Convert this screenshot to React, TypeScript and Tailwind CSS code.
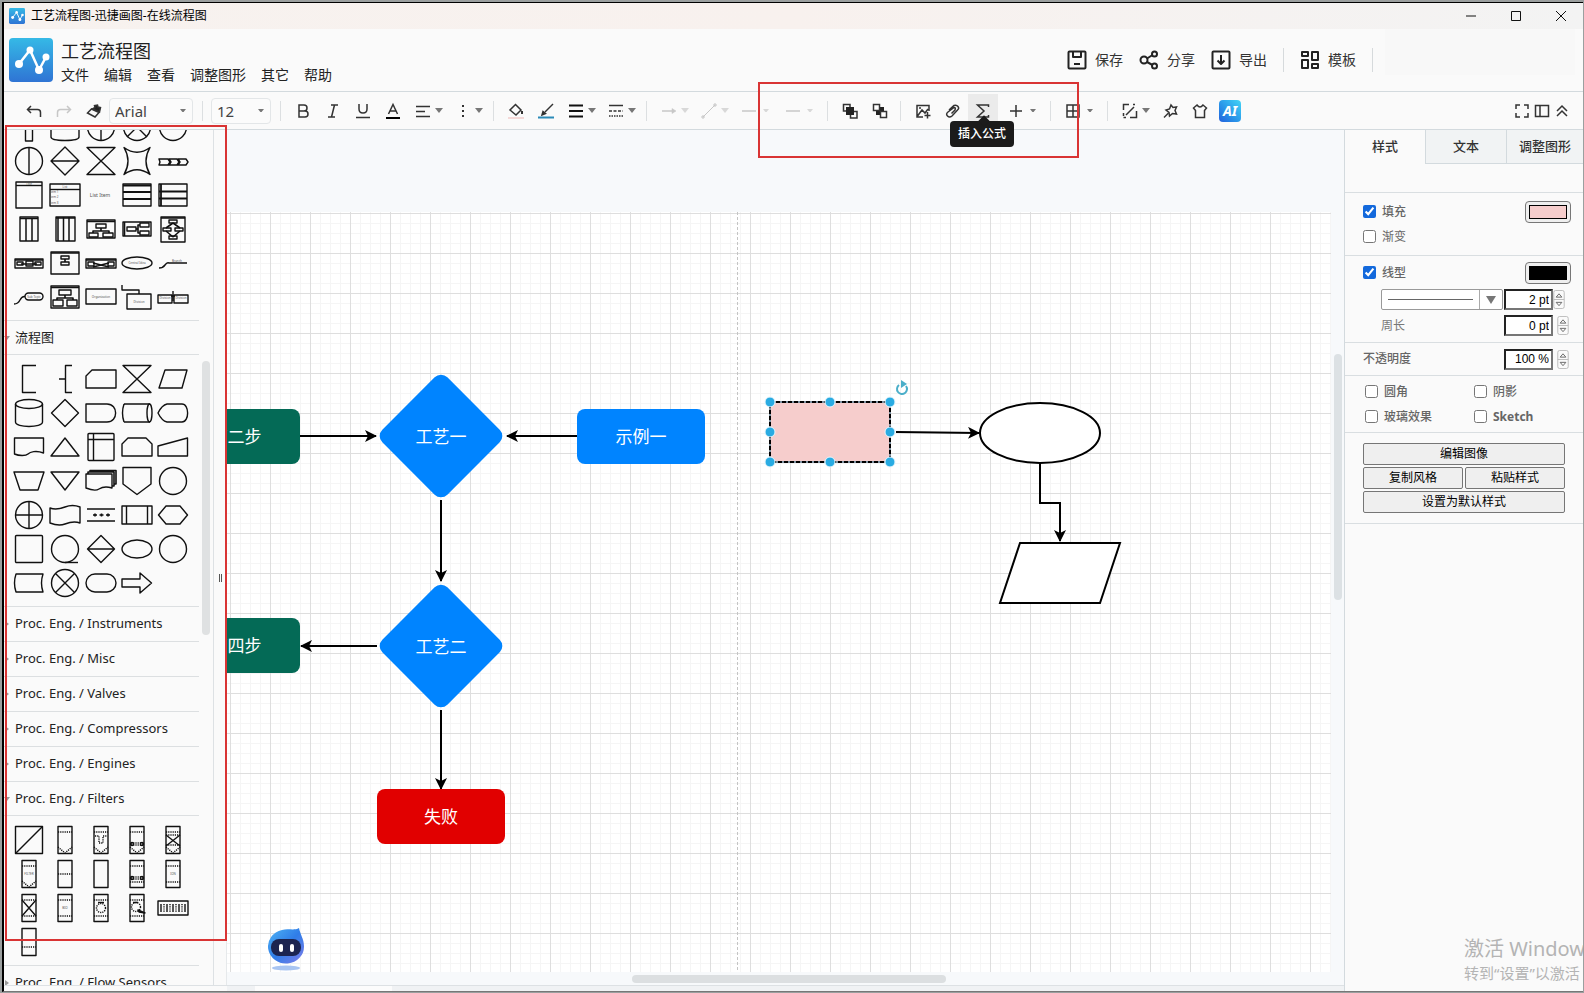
import type { ReactNode } from 'react'
import { clsx } from 'clsx'

/* ---------- shape library ---------- */

const Box = ({ x, y, w, h }: { x: number; y: number; w: number; h: number }) => (
  <rect x={x} y={y} width={w} height={h} />
)

const Label = ({ x, y, size = 3, children }: { x: number; y: number; size?: number; children: string }) => (
  <text x={x} y={y} fontSize={size} textAnchor="middle" fill="#555" stroke="none">
    {children}
  </text>
)

const circle = <circle cx="18" cy="17" r="13.5" />
const dots = { strokeDasharray: '1.2 1' }

// every shape is drawn in a 36 x 34 cell
const generalShapes: ReactNode[] = [
  <path d="M14.500 4V31H21.500V4" />,
  <path d="M4 5V27C4 30 12 30.500 18 30.500S32 30 32 27V5" />,
  <>{circle}<path d="M18 4V31" /></>,
  <>{circle}<path d="M8 27L18 17L28 27" /></>,
  circle,

  <>{circle}<path d="M18 4V31" /></>,
  <path d="M18 3L32 17L18 31L4 17ZM4 17H32" />,
  <path d="M4 3.500H32L4 30.500H32Z" />,
  <path d="M5 3.500Q18 13 31 3.500Q23 17 31 30.500Q18 21 5 30.500Q13 17 5 3.500Z" />,
  <path d="M4 15H13L15 18L13 21H4L5 18ZM14 15H22L24 18L22 21H14L16 18ZM23 15H31L33 18L31 21H23L25 18Z" />,

  <><Box x={5} y={4} w={26} h={26} /><path d="M5 7.500H31" /><Label x={18} y={7}>Title</Label></>,
  <><Box x={3} y={6} w={30} h={22} /><path d="M3 11.500H33" /><Label x={18} y={10}>List</Label><Label x={7} y={15}>Item 1</Label><Label x={7} y={20}>Item 2</Label><Label x={7} y={26}>Item 3</Label></>,
  <Label x={17} y={19} size={5}>List Item</Label>,
  <><Box x={4} y={6} w={28} h={22} /><path d="M4 7.500H32M4 14H32M4 21H32" strokeWidth="1.800" /></>,
  <><Box x={4} y={6} w={28} h={22} /><path d="M4 13.500H32M4 20.500H32M6 6V28" strokeWidth="1.800" /></>,

  <><Box x={9} y={5} w={18} h={24} /><path d="M9 6.500H27M15 6V29M21 6V29" strokeWidth="1.500" /></>,
  <><Box x={9} y={5} w={19} h={24} /><path d="M9 6H28M11 5V29M16.500 5V29M22 5V29" strokeWidth="1.500" /></>,
  <><Box x={4} y={8} w={28} h={18} /><path d="M4 9.500H32M18 16V19M10 21V19H26V21" strokeWidth="1.600" /><Box x={13} y={12} w={10} h={4} /><Box x={6} y={21} w={9} h={4} /><Box x={20} y={21} w={10} h={4} /></>,
  <><Box x={4} y={10} w={28} h={14} /><path d="M5.500 10V24M17 17H19V13H21M19 17V21H21" strokeWidth="1.600" /><Box x={8} y={15} w={9} h={4} /><Box x={21} y={11} w={9} h={4} /><Box x={21} y={19} w={9} h={4} /></>,
  <><Box x={6} y={5} w={24} h={25} /><path d="M6 6H30M18 11L11 16M18 11L25 16M11 19L18 25M25 19L18 25" strokeWidth="1.600" /><Box x={14} y={8} w={8} h={3} /><Box x={8} y={16} w={8} h={3} /><Box x={20} y={16} w={8} h={3} /><Box x={14} y={24} w={8} h={3} /></>,

  <><Box x={4} y={13} w={28} h={9} /><path d="M4 14H32M10 18H26" strokeWidth="1.600" /><Box x={6} y={16} w={6} h={3} /><Box x={15} y={15} w={7} h={5} /><Box x={24} y={16} w={6} h={3} /></>,
  <><Box x={4} y={6} w={28} h={22} /><path d="M4 7H32M18 13V16" strokeWidth="1.600" /><Box x={14} y={10} w={8} h={3} /><Box x={14} y={16} w={8} h={3} /></>,
  <><Box x={3} y={13} w={30} h={9} /><path d="M3 14H33M10 17L26 21M10 21L26 17" strokeWidth="1.600" /><Box x={5} y={16} w={6} h={4} /><Box x={25} y={16} w={6} h={4} /></>,
  <><ellipse cx="18" cy="17" rx="15" ry="6" /><Label x={18} y={18}>Central Idea</Label></>,
  <><path d="M4 22Q8 22 10 19T14 17H32" /><Label x={22} y={16}>Branch</Label></>,

  <><path d="M3 24Q7 24 9 20T14 16.500" /><rect x="14" y="13" width="18" height="7" rx="3.500" /><Label x={23} y={18}>Sub Topic</Label></>,
  <><Box x={4} y={6} w={28} h={22} /><path d="M4 7.500H32M18 15V18M10 20V18H26V20" strokeWidth="1.600" /><Box x={12} y={10} w={12} h={5} /><Box x={6} y={20} w={10} h={6} /><Box x={20} y={20} w={10} h={6} /></>,
  <><Box x={3} y={9} w={30} h={15} /><Label x={18} y={18}>Organization</Label></>,
  <><path d="M3 5V10H20V14" /><Box x={8} y={14} w={24} h={15} /><Label x={20} y={23}>Division</Label></>,
  <><Box x={3} y={15} w={14} h={8} /><Box x={19} y={15} w={14} h={8} /><path d="M18 11V21M16 16H20" /><Label x={10} y={19}>Division</Label><Label x={26} y={19}>Division</Label></>,
]

const flowShapes: ReactNode[] = [
  <path d="M25 3.500H11.500V30.500H25" />,
  <path d="M25 3.500H18.500V30.500H25M12 17H18.500" />,
  <path d="M9 8H33V26H3V14Z" />,
  <path d="M4 3.500H32L4 30.500H32Z" />,
  <path d="M10 8H32L27 26H4Z" />,

  <><ellipse cx="18" cy="8" rx="13.500" ry="4.500" /><path d="M4.500 8V26C4.500 32 31.500 32 31.500 26V8" /></>,
  <path d="M18 3.500L31.500 17L18 30.500L4.500 17Z" />,
  <path d="M3 8H24C35.500 8 35.500 26 24 26H3Z" />,
  <><path d="M5 8H31M5 26H31M5 8Q2 17 5 26" /><ellipse cx="30.500" cy="17" rx="2.500" ry="9" /></>,
  <path d="M3 17Q7 9 12 8H27C34.500 8 34.500 26 27 26H12Q7 25 3 17Z" />,

  <path d="M3.500 8H32.500V23C25 20 19 22 17 24S8 26 3.500 24Z" />,
  <path d="M18 8L32 26H4Z" />,
  <><rect x="5" y="3.500" width="26" height="27" rx="1" /><path d="M5 9.500H31M10.500 3.500V30.500" /></>,
  <path d="M9 8H27L33 14V26H3V14Z" />,
  <path d="M3 16L32.500 8V26H3Z" />,

  <path d="M3 8H33L27 26H9Z" />,
  <path d="M4 8H32L18 26Z" />,
  <><path d="M3 10H29V24C23 22 19 23 16 25S8 26 3 24Z" /><path d="M5 10V8H31V22H29M7 8V6.500H33V20H31" strokeWidth="1.600" /></>,
  <path d="M4 3.500H32V20L18 30.500L4 20Z" />,
  circle,

  <>{circle}<path d="M18 3.500V30.500M4.500 17H31.500" /></>,
  <path d="M3 10C8 12 13 11 18 9S28 7 33 9V25C28 23 23 24 18 26S8 27 3 25Z" />,
  <><path d="M4 11H32M4 23H32" /><path d="M10 17H14M16.500 17H20.500M23 17H27M12 15.500V18.500M18.500 15.500V18.500M25 15.500V18.500" strokeWidth="1.600" /></>,
  <><Box x={3} y={8} w={30} h={18} /><path d="M7.500 8V26M28.500 8V26" /></>,
  <path d="M11 8H25L32.500 17L25 26H11L3.500 17Z" />,

  <rect x="4.500" y="3.500" width="27" height="27" rx="1" />,
  <>{circle}<path d="M18 30.500H31" /></>,
  <path d="M18 3.500L31.500 17L18 30.500L4.500 17ZM4.500 17H31.500" />,
  <ellipse cx="18" cy="17" rx="15" ry="9" />,
  circle,

  <path d="M5 8H32Q29 17 32 26H5Q2 17 5 8Z" />,
  <>{circle}<path d="M8.500 7.500L27.500 26.500M27.500 7.500L8.500 26.500" /></>,
  <rect x="3" y="8" width="30" height="18" rx="9" />,
  <path d="M3 13H21V7L32.500 17L21 27V21H3Z" />,
]

const vessel = <rect x="11" y="3.500" width="14" height="27" />
const topDots = <path d="M11 9H25" {...dots} />
const lowDots = <path d="M11 25H25" {...dots} />
const tip = <path d="M11 24L18 30L25 24" {...dots} />
const wheels = <><path d="M12 20H24M12 22H24" {...dots} /><circle cx="13" cy="21" r="1.500" /><circle cx="23" cy="21" r="1.500" /></>

const filterShapes: ReactNode[] = [
  <><Box x={4.5} y={3.5} w={27} h={27} /><path d="M4.500 30.500L31.500 3.500" /></>,
  <>{vessel}{topDots}{tip}</>,
  <>{vessel}{topDots}{tip}<path d="M12 13H16V20H20V13H24" {...dots} /></>,
  <>{vessel}{topDots}{wheels}{tip}</>,
  <>{vessel}{topDots}<path d="M11 12H25M11 22H25" {...dots} /><path d="M11 12L25 23M25 12L11 23" />{tip}</>,

  <>{vessel}{topDots}{tip}<Label x={18} y={18}>FILTER</Label></>,
  <>{vessel}<path d="M11 17H25" {...dots} /></>,
  vessel,
  <>{vessel}{topDots}{wheels}{lowDots}</>,
  <>{vessel}{topDots}{lowDots}<Label x={18} y={18}>ION</Label></>,

  <>{vessel}{topDots}{lowDots}<path d="M11 9L25 25M25 9L11 25" /></>,
  <>{vessel}{topDots}{lowDots}<Label x={18} y={18}>BIO</Label></>,
  <>{vessel}{topDots}{lowDots}<circle cx="18" cy="17" r="4.500" {...dots} /><path d="M15 11.500H21" /></>,
  <>{vessel}{topDots}{lowDots}<circle cx="17" cy="16" r="4.500" {...dots} /><path d="M14 11.500H19M19 19L26 22L20 21Z" /></>,
  <><Box x={3} y={10} w={30} h={14} /><path d="M6 13V21M12 13V21M18 13V21M24 13V21M30 13V21" /><path d="M9 13V21M15 13V21M21 13V21M27 13V21" {...dots} /></>,

  <>{vessel}<path d="M11 22H25" {...dots} /></>,
]

function ShapeGrid({ shapes }: { shapes: ReactNode[] }) {
  return (
    <div className="grid grid-cols-[repeat(5,36px)] pl-[7px]">
      {shapes.map((shape, i) => (
        <button key={i} className="h-[34px] w-9" aria-label={`shape ${i + 1}`}>
          <svg
            viewBox="0 0 36 34"
            className="h-[34px] w-9"
            fill="none"
            stroke="#111"
            strokeWidth="1.400"
            strokeLinejoin="round"
          >
            {shape}
          </svg>
        </button>
      ))}
    </div>
  )
}

function SectionTitle({ title, open = false, first = false }: { title: string; open?: boolean; first?: boolean }) {
  return (
    <button
      className={clsx(
        'flex h-[35px] w-[195px] shrink-0 items-center gap-[5px] border-t border-[#dcdfe1] text-left text-[13px] text-[#222]',
        open && 'border-b',
        first && 'mt-[6px]'
      )}
    >
      <svg viewBox="0 0 6 6" className="size-[6px]" fill="#999">
        {open ? <path d="M0 1H6L3 5Z" /> : <path d="M1 0V6L5 3Z" />}
      </svg>
      <span className="whitespace-nowrap">{title}</span>
    </button>
  )
}

function Sidebar() {
  return (
    <aside className="flex w-[210px] shrink-0 overflow-hidden border-r border-[#dde1e4] bg-[#fafafa]">
      <div className="-mt-5 flex w-[197px] shrink-0 flex-col">
        <ShapeGrid shapes={generalShapes} />
        <SectionTitle title="流程图" open first />
        <div className="pt-[7px] pb-[6px]">
          <ShapeGrid shapes={flowShapes} />
        </div>
        <SectionTitle title="Proc. Eng. / Instruments" />
        <SectionTitle title="Proc. Eng. / Misc" />
        <SectionTitle title="Proc. Eng. / Valves" />
        <SectionTitle title="Proc. Eng. / Compressors" />
        <SectionTitle title="Proc. Eng. / Engines" />
        <SectionTitle title="Proc. Eng. / Filters" open />
        <div className="pt-[7px] pb-[6px]">
          <ShapeGrid shapes={filterShapes} />
        </div>
        <SectionTitle title="Proc. Eng. / Flow Sensors" />
      </div>
      <div className="mt-[231px] ml-px h-[274px] w-2 rounded-full bg-[#dfe1e2]" />
    </aside>
  )
}

/* ---------- header and toolbar ---------- */

function Logo({ className }: { className: string }) {
  return (
    <svg viewBox="0 0 44 44" className={className}>
      <defs>
        <linearGradient id="logo" x1="0" y1="0" x2="0" y2="1">
          <stop offset="0" stopColor="#35b9e6" />
          <stop offset="1" stopColor="#2f74d4" />
        </linearGradient>
      </defs>
      <rect width="44" height="44" rx="4" fill="url(#logo)" />
      <path d="M10 26L21 12L30 32L37 19" fill="none" stroke="#fff" strokeWidth="2.500" />
      <circle cx="10" cy="26" r="4" fill="#fff" />
      <circle cx="21" cy="12" r="3.500" fill="#fff" />
      <circle cx="30" cy="32" r="4" fill="#fff" />
      <circle cx="37" cy="19" r="3.500" fill="#fff" />
    </svg>
  )
}

const windowIcons = [
  { name: '最小化', d: 'M1 6H11' },
  { name: '最大化', d: 'M1.500 1.500H10.500V10.500H1.500Z' },
  { name: '关闭', d: 'M1 1L11 11M11 1L1 11' },
]

function TitleBar() {
  return (
    <div className="flex h-[26px] shrink-0 items-center bg-linear-to-r from-[#f7f2ef] via-[#f8f1ee] to-[#f3f3f3] pr-[-2px] pl-[5px] text-xs text-black">
      <Logo className="size-4" />
      <span className="ml-[6px] flex-1">工艺流程图-迅捷画图-在线流程图</span>
      {windowIcons.map((icon) => (
        <button key={icon.name} aria-label={icon.name} className="flex w-[45px] justify-center">
          <svg viewBox="0 0 12 12" className="size-3" fill="none" stroke="#111">
            <path d={icon.d} />
          </svg>
        </button>
      ))}
    </div>
  )
}

function HeaderAction({ label, children }: { label: string; children: ReactNode }) {
  return (
    <button className="flex items-center gap-2 text-sm text-[#333]">
      <svg viewBox="0 0 20 20" className="size-5" fill="none" stroke="#222" strokeWidth="2" strokeLinejoin="round">
        {children}
      </svg>
      {label}
    </button>
  )
}

function Header() {
  return (
    <header className="flex h-[63px] shrink-0 items-center border-b border-[#d3dade] bg-[#fafafa] pl-[5px]">
      <Logo className="size-11" />
      <div className="ml-2 flex-1 pt-[6px]">
        <h1 className="text-lg leading-6 text-[#222]">工艺流程图</h1>
        <nav className="flex gap-[15px] text-sm leading-6 text-[#222]">
          {['文件', '编辑', '查看', '调整图形', '其它', '帮助'].map((item) => (
            <button key={item}>{item}</button>
          ))}
        </nav>
      </div>
      <div className="flex items-center gap-4">
        <HeaderAction label="保存">
          <rect x="1.500" y="1.500" width="17" height="17" rx="1" />
          <path d="M6 2V7H14V2M7 14H13" />
        </HeaderAction>
        <HeaderAction label="分享">
          <circle cx="5" cy="10" r="3.500" />
          <circle cx="15.500" cy="4" r="2.500" />
          <circle cx="15.500" cy="16" r="2.500" />
          <path d="M8 8.500L13.500 5M8 12L13.500 15" />
        </HeaderAction>
        <HeaderAction label="导出">
          <rect x="1.500" y="1.500" width="17" height="17" rx="1" />
          <path d="M10 5V14M6.500 10.500L10 14L13.500 10.500" />
        </HeaderAction>
        <div className="h-6 border-l border-[#d6dadc]" />
        <HeaderAction label="模板">
          <rect x="2" y="2" width="6" height="4" />
          <rect x="2" y="10" width="6" height="8" />
          <rect x="12" y="2" width="6" height="8" />
          <rect x="12" y="14" width="6" height="4" />
        </HeaderAction>
        <div className="h-6 border-l border-[#d6dadc]" />
      </div>
      <div className="mr-2 ml-3 h-[46px] w-[190px] self-start bg-[#f8f8f8]" />
    </header>
  )
}

interface ToolProps {
  name: string
  caret?: boolean
  wide?: boolean
  disabled?: boolean
  active?: boolean
  children: ReactNode
}

function Tool({ name, caret, wide, disabled, active, children }: ToolProps) {
  return (
    <button
      aria-label={name}
      disabled={disabled}
      className={clsx(
        'flex h-[34px] shrink-0 items-center',
        caret ? 'pl-[5px]' : 'justify-center',
        caret ? (wide ? 'w-11 gap-1' : 'w-10') : 'w-[30px]',
        disabled && 'opacity-25',
        active && 'bg-[#ebebeb]'
      )}
    >
      <svg viewBox="0 0 20 20" className="size-5 shrink-0" fill="none" stroke="#333" strokeWidth="1.500">
        {children}
      </svg>
      {caret && (
        <svg viewBox="0 0 8 5" className={clsx('shrink-0', wide ? 'w-[6px]' : 'ml-[2px] w-2')} fill="#777">
          <path d="M0 0H8L4 5Z" />
        </svg>
      )}
    </button>
  )
}

const Sep = () => <div className="mr-[7px] ml-[5px] h-5 shrink-0 border-l border-[#dcdfe1]" />

function ToolSelect({ label, value, className }: { label: string; value: string; className: string }) {
  return (
    <div className={clsx('relative shrink-0', className)}>
      <select
        aria-label={label}
        defaultValue={value}
        className="h-[26px] w-full appearance-none rounded border border-[#e3e6e8] bg-[#fbfbfb] pl-[5px] text-[15px] leading-6 text-[#444]"
      >
        <option>{value}</option>
      </select>
      <svg viewBox="0 0 8 5" className="pointer-events-none absolute top-[11px] right-[7px] w-[6px]" fill="#777">
        <path d="M0 0H8L4 5Z" />
      </svg>
    </div>
  )
}

function Toolbar() {
  return (
    <div className="flex h-[38px] shrink-0 items-center border-b border-[#d3dade] bg-[#fafafa] pl-[15px]">
      <Tool name="撤销"><path d="M7 5L3.500 8.500L7 12M4 8.500H13.500Q16.500 8.500 16.500 11.500V16" /></Tool>
      <Tool name="重做" disabled><path d="M13 5L16.500 8.500L13 12M16 8.500H6.500Q3.500 8.500 3.500 11.500V16" /></Tool>
      <Tool name="格式刷">
        <path d="M8.500 8L11 6.500L10.500 4.500L13.500 4L14 6L16.500 6.500L15.500 11Z" fill="#222" />
        <path d="M7.500 8L15 11.500L11 16L3.500 12Z" />
      </Tool>
      <ToolSelect label="字体" value="Arial" className="w-[84px]" />
      <div className="mr-2 ml-[9px] h-5 shrink-0 border-l border-[#dcdfe1]" />
      <ToolSelect label="字号" value="12" className="w-[60px]" />
      <div className="mr-[7px] ml-[9px] h-5 shrink-0 border-l border-[#dcdfe1]" />

      <Tool name="加粗"><path d="M6 4H11Q14 4 14 7T11 10H6ZM6 10H12Q15 10 15 13T12 16H6Z" /></Tool>
      <Tool name="斜体"><path d="M8 4H15M5 16H12M11.500 4L8.500 16" /></Tool>
      <Tool name="下划线"><path d="M6 3V8Q6 12 10 12T14 8V3M3 16.500H17" /></Tool>
      <Tool name="文字颜色">
        <path d="M5.500 13L10 3.500L14.500 13M7 10H13" />
        <path d="M3 17H17" stroke="#000" strokeWidth="2" />
      </Tool>
      <Tool name="对齐" caret><path d="M3 5.500H17M3 10.500H12M3 15.500H17" /></Tool>
      <Tool name="间距" caret><path d="M10 4V6M10 9V11M10 14V16" strokeWidth="2" /></Tool>
      <Sep />

      <Tool name="填充颜色">
        <path d="M9 3L15 9L10 14L4 9L9 4" />
        <path d="M16 10V13" strokeWidth="2" />
        <path d="M2 17H18" stroke="#f2cccb" />
      </Tool>
      <Tool name="线条颜色">
        <path d="M17 3L9 11" strokeWidth="1.500" />
        <path d="M6 14L7 10.500L9.500 12.500Z" fill="#333" />
        <path d="M2 16.500H18" stroke="#2b8bb8" strokeWidth="2" />
      </Tool>
      <Tool name="线宽" caret><path d="M3 4.500H17M3 10H17M3 15.500H17" stroke="#111" strokeWidth="2" /></Tool>
      <Tool name="线型" caret>
        <path d="M3 4.500H17" />
        <path d="M3 10H17" strokeDasharray="3 1.500" />
        <path d="M3 15H17" strokeDasharray="1.500 1" />
      </Tool>
      <Sep />

      <Tool name="连接线" caret disabled><path d="M3 10H14" /><path d="M13 7.500L17 10L13 12.500Z" fill="#333" strokeWidth="0.500" /></Tool>
      <Tool name="直线" caret disabled><path d="M4 16L16 4M3 15H5V17H3ZM15 3H17V5H15Z" strokeWidth="1" /></Tool>
      <Tool name="起点" caret wide disabled><path d="M3 10H17" /></Tool>
      <Tool name="终点" caret wide disabled><path d="M3 10H17" /></Tool>
      <Sep />

      <Tool name="置于顶层">
        <path d="M3.500 3.500H10V10H3.500ZM10.500 10.500H17V17H10.500Z" />
        <rect x="6" y="6" width="8" height="8" fill="#222" stroke="none" />
      </Tool>
      <Tool name="置于底层">
        <rect x="6" y="6" width="8" height="8" fill="#222" stroke="none" />
        <path d="M3.500 3.500H9.500V9.500H3.500ZM10.500 10.500H16.500V16.500H10.500Z" fill="#fff" />
      </Tool>
      <Sep />

      <Tool name="插入图片">
        <path d="M10 16H4V4.500H16V10M4.500 15L9 9L12 12L15 8M14.500 11V17.500M11.500 14.500H17.500" />
        <path d="M6 7H8" />
      </Tool>
      <Tool name="插入附件">
        <path d="M6 9L11 4.500Q13.500 3.500 15 5.500T14.500 9L9 15Q6.500 17 4.500 15T5 11L11 6.500Q13 6.500 12 9L8.500 12.500" />
      </Tool>
      <Tool name="插入公式" active><path d="M15.500 6V4H4.500L11 10L4.500 16H15.500V14" /></Tool>
      <div className="pl-[3px]">
        <Tool name="插入" caret wide><path d="M10 4V16M4 10H16" /></Tool>
      </div>
      <Sep />

      <Tool name="表格" caret wide><path d="M4 4H16V16H4ZM10 4V16M4 10H16" /></Tool>
      <Sep />

      <Tool name="布局" caret>
        <path d="M3.500 9V3.500H9M16.500 10V16.500H10M6 14L14 6M3.500 12V15" />
        <path d="M3.500 16.500H6M13 3.500H15" />
      </Tool>
      <Tool name="固定">
        <path d="M11 4L13 6.500L16.500 6L15 9.500L16.500 13L12.500 12.500L9.500 15L9 11.500L6 9L9.500 8Z" />
        <path d="M8.500 12L4 16.500" />
      </Tool>
      <Tool name="主题"><path d="M7 4L3.500 7L5.500 9.500V16.500H14.500V9.500L16.500 7L13 4Q10 8 7 4Z" /></Tool>
      <button aria-label="AI" className="flex w-[30px] shrink-0 justify-center">
        <span className="flex size-[22px] items-center justify-center rounded bg-linear-to-bl from-[#45d5f5] to-[#2460dc] text-sm font-bold text-white italic">
          AI
        </span>
      </button>

      <div className="ml-auto flex pr-[11px]">
        {[
          'M4 8V4H8M12 4H16V8M16 12V16H12M8 16H4V12',
          'M3.500 4.500H16.500V15.500H3.500ZM8 4.500V15.500',
          'M5 10L10 5L15 10M5 15L10 10L15 15',
        ].map((d) => (
          <button key={d} aria-label="视图">
            <svg viewBox="0 0 20 20" className="size-5" fill="none" stroke="#333" strokeWidth="1.500">
              <path d={d} />
            </svg>
          </button>
        ))}
      </div>
    </div>
  )
}

/* ---------- canvas ---------- */

const handles = [
  [543, 272], [603, 272], [663, 272],
  [543, 302], [663, 302],
  [543, 332], [603, 332], [663, 332],
]

function FlowBlock({ x, y, fill, text }: { x: number; y: number; fill: string; text: string }) {
  return (
    <g>
      <rect x={x} y={y} width="128" height="55" rx="8" fill={fill} />
      <text x={x + 64} y={y + 34} fontSize="17" textAnchor="middle" fill="#fff">{text}</text>
    </g>
  )
}

function Decision({ y, text }: { y: number; text: string }) {
  return (
    <g>
      <rect x="168" y={y - 46} width="92" height="92" rx="9" fill="#0084ff" transform={`rotate(45 214 ${y})`} />
      <text x="214" y={y + 7} fontSize="17" textAnchor="middle" fill="#fff">{text}</text>
    </g>
  )
}

function Robot() {
  return (
    <svg viewBox="0 0 37 46" className="absolute bottom-3 left-[41px] h-[46px] w-[37px]">
      <defs>
        <linearGradient id="robot" x1="0" y1="0" x2="1" y2="1">
          <stop offset="0" stopColor="#4fb4f5" />
          <stop offset="0.500" stopColor="#2f7de8" />
          <stop offset="1" stopColor="#7f7be8" />
        </linearGradient>
      </defs>
      <ellipse cx="18" cy="41" rx="14" ry="2.500" fill="#a9c5f2" />
      <path d="M31 1C32 7 36 12 36 19A18 17 0 1 1 14 3C20 1 26 4 31 1Z" fill="url(#robot)" />
      <rect x="3" y="12" width="30" height="17" rx="8" fill="#1c2450" />
      <rect x="11" y="17" width="4" height="8" rx="2" fill="#fff" />
      <rect x="22" y="17" width="4" height="8" rx="2" fill="#fff" />
    </svg>
  )
}

function Canvas() {
  return (
    <main className="relative min-w-0 flex-1 overflow-hidden bg-[#f7f9fb]">
      <svg className="block h-full w-full">
        <defs>
          <pattern id="minor" x="3" y="3" width="10" height="10" patternUnits="userSpaceOnUse">
            <path d="M0.500 0V10M0 0.500H10" stroke="#f5f5f5" />
          </pattern>
          <pattern id="major" x="3" y="3" width="40" height="40" patternUnits="userSpaceOnUse">
            <path d="M0.500 0V40M0 0.500H40" stroke="#dedede" />
          </pattern>
          <marker id="arrow" viewBox="0 0 12 12" refX="11" refY="6" markerWidth="12" markerHeight="12" markerUnits="userSpaceOnUse" orient="auto">
            <path d="M0 0L12 6L0 12L3 6Z" />
          </marker>
        </defs>
        <rect y="82" width="1104" height="760" fill="#fff" />
        <rect y="82" width="1104" height="760" fill="url(#minor)" />
        <rect y="82" width="1104" height="760" fill="url(#major)" />
        <path d="M510.500 82V842" stroke="#c4c4c4" strokeDasharray="3 2" />

        <g fill="none" stroke="#000" strokeWidth="2">
          <path d="M73 306H149" markerEnd="url(#arrow)" />
          <path d="M350 306H280" markerEnd="url(#arrow)" />
          <path d="M214 370V451" markerEnd="url(#arrow)" />
          <path d="M150 516H74" markerEnd="url(#arrow)" />
          <path d="M214 580V659" markerEnd="url(#arrow)" />
          <path d="M669 302L752 303" markerEnd="url(#arrow)" />
          <path d="M813 333V373H833V411" markerEnd="url(#arrow)" />
        </g>

        <FlowBlock x={-55} y={279} fill="#046a56" text="第二步" />
        <FlowBlock x={-55} y={488} fill="#046a56" text="第四步" />
        <FlowBlock x={350} y={279} fill="#0084ff" text="示例一" />
        <FlowBlock x={150} y={659} fill="#e10000" text="失败" />
        <Decision y={306} text="工艺一" />
        <Decision y={516} text="工艺二" />

        <ellipse cx="813" cy="303" rx="60" ry="30" fill="#fff" stroke="#000" strokeWidth="2" />
        <path d="M793 413H893L873 473H773Z" fill="#fff" stroke="#000" strokeWidth="2" />

        <rect x="543" y="272" width="120" height="60" fill="#f6cdcc" stroke="#7f93a3" strokeWidth="2" />
        <rect x="543" y="272" width="120" height="60" fill="none" stroke="#000" strokeWidth="2" strokeDasharray="4 2" />
        {handles.map(([cx, cy]) => (
          <circle key={`${cx}-${cy}`} cx={cx} cy={cy} r="5" fill="#29abe2" stroke="#eaf7fd" />
        ))}
        <path d="M672 255A5 5 0 1 0 679 256" fill="none" stroke="#4aaec9" strokeWidth="2" />
        <path d="M674 250L680 254L674 258Z" fill="#4aaec9" />
      </svg>
      <Robot />
      <div className="absolute top-[224px] right-[2px] h-[246px] w-2 rounded-full bg-[#dce1e4]" />
      <div className="absolute bottom-[2px] left-[405px] h-2 w-[314px] rounded-full bg-[#dcdfe1]" />
    </main>
  )
}

/* ---------- format panel ---------- */

function Check({ label, checked, light }: { label: string; checked?: boolean; light?: boolean }) {
  return (
    <label
      className={clsx('flex h-[25px] items-center gap-[6px] text-xs text-[#666]', !light && 'font-medium')}
    >
      <input type="checkbox" defaultChecked={checked} className="size-[13px] accent-[#1369dc]" />
      {label}
    </label>
  )
}

function ColorButton({ name, children }: { name: string; children: ReactNode }) {
  return (
    <button
      aria-label={name}
      className="h-[22px] w-[46px] rounded border border-[#777] bg-[#efefef] p-[3px]"
    >
      {children}
    </button>
  )
}

function NumberField({ name, value, tight }: { name: string; value: string; tight?: boolean }) {
  return (
    <div className="flex items-center">
      <input
        aria-label={name}
        defaultValue={value}
        className="h-[21px] w-[49px] border-2 border-[#767676] border-t-[#222] border-l-[#222] bg-white pr-[2px] text-right font-['Liberation_Sans'] text-xs text-black"
      />
      <svg viewBox="0 0 12 20" className={clsx('h-[19px] w-3', !tight && 'ml-1')} fill="none" stroke="#999">
        <rect x="0.500" y="0.500" width="11" height="19" rx="2" stroke="#bbb" />
        <path d="M0.500 10H11.500" stroke="#bbb" />
        <path d="M3 7.500L6 4L9 7.500ZM3 13L6 16.500L9 13Z" stroke="#666" />
      </svg>
    </div>
  )
}

function PanelButton({ children }: { children: string }) {
  return (
    <button className="h-[22px] flex-1 rounded-[2px] border border-[#767676] bg-[#efefef] text-xs text-black">
      {children}
    </button>
  )
}

function FormatPanel() {
  return (
    <aside className="relative w-[239px] shrink-0 overflow-hidden border-l border-[#d3dade] bg-[#fafafa]">
      <div role="tablist" className="flex h-[34px] text-[13px] font-medium text-[#333]">
        <button role="tab" className="w-20">样式</button>
        <button role="tab" className="w-[81px] border-b border-l border-[#d3dade] bg-[#f1f3f4]">文本</button>
        <button role="tab" className="flex-1 border-b border-l border-[#d3dade] bg-[#f1f3f4]">调整图形</button>
      </div>
      <div className="h-7" />

      <section className="flex h-[63px] justify-between border-t border-[#d9dee1] pt-[6px] pr-3 pl-[18px]">
        <div>
          <Check label="填充" checked />
          <Check label="渐变" light />
        </div>
        <div className="pt-[2px]">
          <ColorButton name="填充颜色">
            <span className="block h-full border border-black bg-[#f6cdcc]" />
          </ColorButton>
        </div>
      </section>

      <section className="h-[87px] border-t border-[#d9dee1] pt-[4px]">
        <div className="flex items-center justify-between pr-3 pl-[18px]">
          <Check label="线型" checked />
          <ColorButton name="线条颜色">
            <span className="block h-full bg-black" />
          </ColorButton>
        </div>
        <div className="mt-1 flex gap-px pl-9">
          <button aria-label="线条样式" className="flex h-[21px] w-[122px] items-center rounded-[2px] border border-[#999] bg-white">
            <span className="mx-[6px] flex-1 border-t border-[#666]" />
            <span className="flex h-full w-[23px] items-center justify-center border-l border-[#aaa]">
              <svg viewBox="0 0 10 8" className="w-[10px]" fill="#777"><path d="M0 0H10L5 8Z" /></svg>
            </span>
          </button>
          <NumberField name="线宽" value="2 pt" tight />
        </div>
        <div className="mt-[5px] flex items-center justify-between pr-[14px] pl-9 text-xs text-[#777]">
          <span>周长</span>
          <NumberField name="周长" value="0 pt" />
        </div>
      </section>

      <section className="flex h-[33px] items-center justify-between border-t border-[#d9dee1] pr-[14px] pl-[18px] text-xs font-medium text-[#666]">
        <span>不透明度</span>
        <NumberField name="不透明度" value="100 %" />
      </section>

      <section className="grid h-[57px] grid-cols-2 content-center border-t border-[#d9dee1] pl-5">
        <Check label="圆角" />
        <Check label="阴影" />
        <Check label="玻璃效果" />
        <label className="flex h-[25px] items-center gap-[6px] text-xs font-bold text-[#666]">
          <input type="checkbox" className="size-[13px]" />
          Sketch
        </label>
      </section>

      <section className="flex h-[92px] flex-col gap-[2px] border-y border-[#d9dee1] pt-[10px] pr-[18px] pl-[18px]">
        <div className="flex"><PanelButton>编辑图像</PanelButton></div>
        <div className="flex gap-[2px]">
          <PanelButton>复制风格</PanelButton>
          <PanelButton>粘贴样式</PanelButton>
        </div>
        <div className="flex"><PanelButton>设置为默认样式</PanelButton></div>
      </section>

      <div className="absolute bottom-2 left-[119px] whitespace-nowrap text-[#b4b4b4]">
        <p className="text-xl leading-7">激活 Windows</p>
        <p className="text-[15px] leading-5">转到“设置”以激活 Windows。</p>
      </div>
    </aside>
  )
}

export default function App() {
  return (
    <div className="relative h-screen overflow-hidden bg-[#9b9f9f] pt-[2px] pr-px pb-px pl-[2px] font-['Noto_Sans','Noto_Sans_CJK_SC',sans-serif]">
      <div className="flex h-full flex-col overflow-hidden border-t border-b border-l-2 border-t-black border-b-[#777] border-l-black bg-[#fafafa]">
        <TitleBar />
        <Header />
        <Toolbar />
        <div className="flex min-h-0 flex-1">
          <div className="flex min-w-0 flex-1 flex-col">
            <div className="flex min-h-0 flex-1">
              <Sidebar />
              <div className="flex w-[13px] shrink-0 items-center justify-center border-r border-[#e6e9eb]">
                <div className="mt-[40px] h-2 w-[3px] border-x border-[#555]" />
              </div>
              <Canvas />
            </div>
            <footer className="flex h-[6px] shrink-0 border-t border-[#dde1e4]">
              <div className="w-[223px] bg-[#fafafa]" />
              <div className="flex-1 bg-[#f0f2f4] pl-7">
                <div className="h-full w-[137px] bg-[#fcfcfc]" />
              </div>
            </footer>
          </div>
          <FormatPanel />
        </div>
      </div>

      <div className="absolute top-[121px] left-[950px] rounded bg-[#1b1b1b] px-2 py-1 text-xs leading-[18px] font-medium text-white">
        <span className="absolute -top-1 left-[30px] size-2 rotate-45 bg-[#1b1b1b]" />
        <span className="relative">插入公式</span>
      </div>
      <div className="pointer-events-none absolute top-[125px] left-[5px] h-[816px] w-[222px] border-2 border-[#d93434]" />
      <div className="pointer-events-none absolute top-[82px] left-[758px] h-[76px] w-[321px] border-2 border-[#d93434]" />
    </div>
  )
}
